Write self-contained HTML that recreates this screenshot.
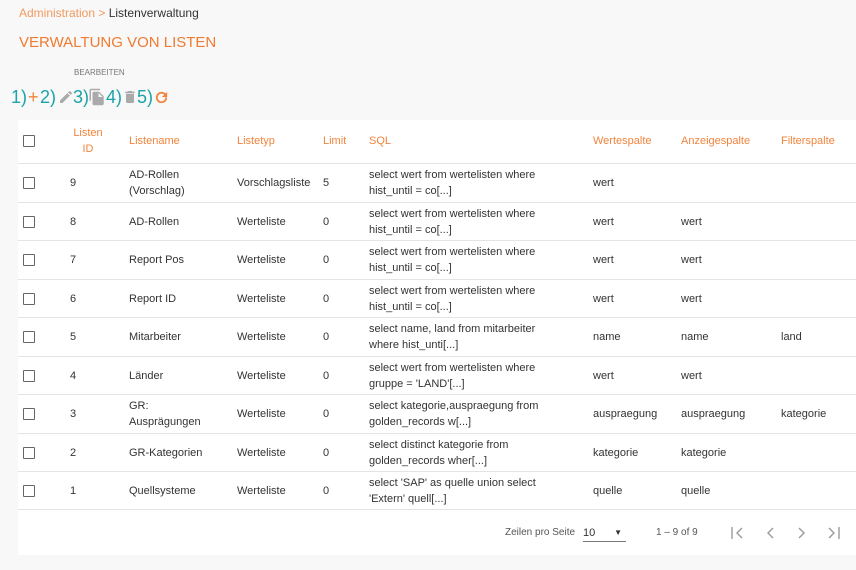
<!DOCTYPE html>
<html><head><meta charset="utf-8"><style>
body{margin:0;width:856px;height:570px;background:#f8f8f8;font-family:"Liberation Sans",sans-serif;position:relative;overflow:hidden;color:#333}
.a{position:absolute;white-space:nowrap}
.card{position:absolute;left:18px;top:120px;width:838px;height:435px;background:#fff}
.row{position:absolute;left:0;width:838px;border-top:1px solid #e4e4e4;font-size:11px;color:#333}
.cb{position:absolute;left:5px;width:10px;height:10px;border:1.5px solid #666;border-radius:1px}
.c{position:absolute;line-height:16px}
.h{color:#f0843c;font-size:11px}
.tb{position:absolute;top:86px;font-size:18px;color:#1aa3a8;line-height:22px}
</style></head><body>
<div class="a" style="left:19px;top:6px;font-size:12px;color:#f09a5e">Administration &gt; <span style="color:#333">Listenverwaltung</span></div>
<div class="a" style="left:19px;top:34px;font-size:15px;color:#f07a30">VERWALTUNG VON LISTEN</div>
<div class="a" style="left:74px;top:68px;font-size:8px;color:#777">BEARBEITEN</div>
<div class="tb" style="left:11px">1)</div>
<div class="tb" style="left:28px;color:#f0843c">+</div>
<div class="tb" style="left:40px">2)</div>
<svg class="a" style="left:58px;top:89px" width="16" height="16" viewBox="0 0 24 24"><path d="M3 17.25V21h3.75L17.81 9.94l-3.75-3.75L3 17.25zM20.71 7.04a1 1 0 000-1.41l-2.34-2.34a1 1 0 00-1.41 0l-1.83 1.83 3.75 3.75 1.83-1.83z" fill="#aaa"/></svg>
<div class="tb" style="left:73px">3)</div>
<svg class="a" style="left:88px;top:88px" width="18" height="18" viewBox="0 0 24 24"><path d="M16 1H4c-1.1 0-2 .9-2 2v14h2V3h12V1zm-1 4l6 6v10c0 1.1-.9 2-2 2H8c-1.1 0-2-.9-2-2V7c0-1.1.9-2 2-2h7zm-1 7h5.5L14 6.5V12z" fill="#aaa"/></svg>
<div class="tb" style="left:106px">4)</div>
<svg class="a" style="left:122px;top:89px" width="16" height="16" viewBox="0 0 24 24"><path d="M6 19c0 1.1.9 2 2 2h8c1.1 0 2-.9 2-2V7H6v12zM19 4h-3.5l-1-1h-5l-1 1H5v2h14V4z" fill="#aaa"/></svg>
<div class="tb" style="left:137px">5)</div>
<svg class="a" style="left:153px;top:89px" width="17" height="17" viewBox="0 0 24 24"><path d="M17.65 6.35A7.958 7.958 0 0012 4a8 8 0 108 8h-2.6A5.4 5.4 0 1112 6.6c1.5 0 2.8.6 3.8 1.6L12.5 11.5H20V4l-2.35 2.35z" fill="#f0843c"/></svg>
<div class="card">
<div class="cb" style="top:15px"></div>
<div class="c h" style="left:50px;top:5px;width:40px;text-align:center">Listen<br>ID</div>
<div class="c h" style="left:111px;top:13px">Listename</div>
<div class="c h" style="left:219px;top:13px">Listetyp</div>
<div class="c h" style="left:305px;top:13px">Limit</div>
<div class="c h" style="left:351px;top:13px">SQL</div>
<div class="c h" style="left:575px;top:13px">Wertespalte</div>
<div class="c h" style="left:663px;top:13px">Anzeigespalte</div>
<div class="c h" style="left:763px;top:13px">Filterspalte</div>
</div>
<div id="rows"></div>
<script>
const d=[["9","AD-Rollen<br>(Vorschlag)","Vorschlagsliste","5","select wert from wertelisten where<br>hist_until = co[...]","wert","",""],
["8","AD-Rollen","Werteliste","0","select wert from wertelisten where<br>hist_until = co[...]","wert","wert",""],
["7","Report Pos","Werteliste","0","select wert from wertelisten where<br>hist_until = co[...]","wert","wert",""],
["6","Report ID","Werteliste","0","select wert from wertelisten where<br>hist_until = co[...]","wert","wert",""],
["5","Mitarbeiter","Werteliste","0","select name, land from mitarbeiter<br>where hist_unti[...]","name","name","land"],
["4","Länder","Werteliste","0","select wert from wertelisten where<br>gruppe = 'LAND'[...]","wert","wert",""],
["3","GR:<br>Ausprägungen","Werteliste","0","select kategorie,auspraegung from<br>golden_records w[...]","auspraegung","auspraegung","kategorie"],
["2","GR-Kategorien","Werteliste","0","select distinct kategorie from<br>golden_records wher[...]","kategorie","kategorie",""],
["1","Quellsysteme","Werteliste","0","select 'SAP' as quelle union select<br>'Extern' quell[...]","quelle","quelle",""]];
const xs=[52,111,219,305,351,575,663,763];let h="";
d.forEach((r,i)=>{const t=163+i*38.5;h+=`<div class="row" style="left:18px;top:${t}px;height:38px"><div class="cb" style="top:13px"></div>`;
r.forEach((v,j)=>{const two=v.includes("<br>");h+=`<div class="c" style="left:${xs[j]}px;top:${two?3:11}px">${v}</div>`});h+="</div>"});
const arr=(x,p)=>`<svg style="position:absolute;left:${x}px;top:15px" width="16" height="16" viewBox="0 0 16 16"><path d="${p}" stroke="#999" stroke-width="1.4" fill="none"/></svg>`;
h+=`<div class="row" style="left:18px;top:509px;height:46px;font-size:10px;color:#555">
<div class="c" style="left:487px;top:15px">Zeilen pro Seite</div>
<div class="c" style="left:565px;top:15px;width:43px;border-bottom:1px solid #777;color:#333;font-size:11px">10<span style="position:absolute;right:4px;font-size:8px">▼</span></div>
<div class="c" style="left:638px;top:15px">1 – 9 of 9</div>
${arr(712,"M2 2V14M12 3L7 8L12 13")}${arr(744,"M11 3L6 8L11 13")}${arr(776,"M5 3L10 8L5 13")}${arr(808,"M3 3L8 8L3 13M13 2V14")}</div>`;
document.getElementById("rows").innerHTML=h;
</script>
</body></html>
